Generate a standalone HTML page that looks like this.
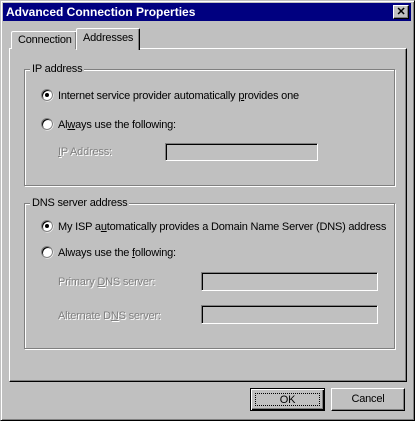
<!DOCTYPE html><html><head><style>
*{margin:0;padding:0;box-sizing:border-box}
body{width:415px;height:421px;background:#c0c0c0;position:relative;overflow:hidden;font-family:"Liberation Sans",Arial,sans-serif;font-size:11px;letter-spacing:-0.2px;color:#000}
.a{position:absolute}
.win{left:0;top:0;width:415px;height:421px;border-top:1px solid #c0c0c0;border-left:1px solid #c0c0c0;border-right:1px solid #000;border-bottom:1px solid #000;box-shadow:inset 1px 1px 0 #fff,inset -1px -1px 0 #808080}
.title{left:3px;top:3px;width:408px;height:18px;background:#000080;color:#fff;font-weight:bold;font-size:12px;letter-spacing:0;line-height:18px;padding-left:3px}
.cb{left:393px;top:5px;width:16px;height:14px;background:#c0c0c0;border-top:1px solid #fff;border-left:1px solid #fff;border-right:1px solid #000;border-bottom:1px solid #000;box-shadow:inset -1px -1px 0 #808080;font-size:11px;font-weight:bold;text-align:center;line-height:12px;color:#000}
.panel{left:9px;top:48px;width:398px;height:334px;border-top:1px solid #fff;border-left:1px solid #fff;border-right:1px solid #000;border-bottom:1px solid #000;box-shadow:inset -1px -1px 0 #808080}
.tab{background:#c0c0c0;border-top:1px solid #fff;border-left:1px solid #fff;border-right:1px solid #000;border-radius:2px 2px 0 0;box-shadow:inset -1px 0 0 #808080;line-height:16px;padding-left:6px}
.grp{border:1px solid #808080;box-shadow:1px 1px 0 #fff,inset 1px 1px 0 #fff}
.gl{background:#c0c0c0;padding:0 2px;line-height:12px}
.rad{width:12px;height:12px;border-radius:50%;background:#fff;border:1px solid #808080;box-shadow:inset 1px 1px 0 #000,0.5px 0.5px 0 #fff}
.dot{position:absolute;left:3px;top:3px;width:4px;height:4px;border-radius:50%;background:#000}
.dis{color:#808080;text-shadow:1px 1px 0 #fff}
.inp{border-top:1px solid #808080;border-left:1px solid #808080;border-right:1px solid #fff;border-bottom:1px solid #fff;box-shadow:inset 1px 1px 0 #000}
.btn{border-top:1px solid #fff;border-left:1px solid #fff;border-right:1px solid #000;border-bottom:1px solid #000;box-shadow:inset -1px -1px 0 #808080;text-align:center;line-height:20px}
u{text-decoration:underline}
</style></head><body>
<div class="a win"></div>
<div class="a title">Advanced Connection Properties</div>
<div class="a cb">✕</div>
<div class="a panel"></div>
<div class="a tab" style="left:11px;top:31px;width:66px;height:18px">Connection</div>
<div class="a tab" style="left:76px;top:28px;width:64px;height:22px;line-height:18px;border-bottom:none">Addresses</div>

<div class="a grp" style="left:24px;top:69px;width:371px;height:117px"></div>
<div class="a gl" style="left:30px;top:63px">IP address</div>
<div class="a rad" style="left:41px;top:89px"><div class="dot"></div></div>
<div class="a" style="left:58px;top:90px">Internet service provider automatically <u>p</u>rovides one</div>
<div class="a rad" style="left:41px;top:118px"></div>
<div class="a" style="left:58px;top:119px">Al<u>w</u>ays use the following:</div>
<div class="a dis" style="left:58px;top:146px"><u>I</u>P Address:</div>
<div class="a inp" style="left:165px;top:143px;width:153px;height:18px"></div>

<div class="a grp" style="left:24px;top:203px;width:371px;height:146px"></div>
<div class="a gl" style="left:30px;top:197px">DNS server address</div>
<div class="a rad" style="left:41px;top:220px"><div class="dot"></div></div>
<div class="a" style="left:58px;top:221px">My ISP a<u>u</u>tomatically provides a Domain Name Server (DNS) address</div>
<div class="a rad" style="left:41px;top:246px"></div>
<div class="a" style="left:58px;top:247px">Always use the <u>f</u>ollowing:</div>
<div class="a dis" style="left:58px;top:276px">Primary <u>D</u>NS server:</div>
<div class="a inp" style="left:201px;top:272px;width:177px;height:19px"></div>
<div class="a dis" style="left:58px;top:310px">Alternate D<u>N</u>S server:</div>
<div class="a inp" style="left:201px;top:305px;width:177px;height:19px"></div>

<div class="a btn" style="left:250px;top:388px;width:75px;height:23px;border:1px solid #000;box-shadow:inset 1px 1px 0 #fff,inset -1px -1px 0 #000,inset -2px -2px 0 #808080"><div style="position:absolute;left:4px;top:4px;right:4px;bottom:4px;border:1px dotted #000;line-height:13px">OK</div></div>
<div class="a btn" style="left:331px;top:388px;width:74px;height:23px">Cancel</div>
</body></html>
